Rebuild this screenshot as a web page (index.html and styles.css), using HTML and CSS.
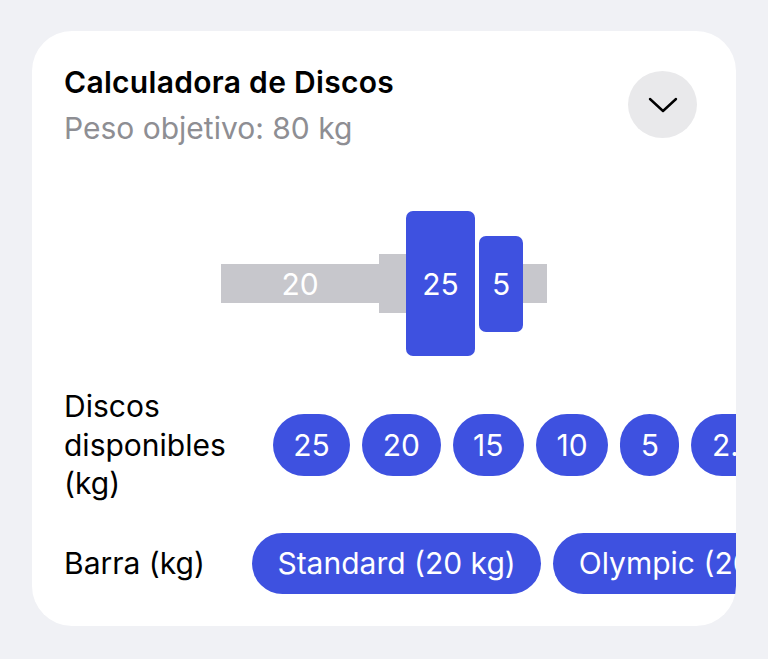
FILE: index.html
```html
<!DOCTYPE html>
<html lang="es">
<head>
<meta charset="utf-8">
<title>Calculadora de Discos</title>
<link rel="stylesheet" href="styles.css">
</head>
<body>
<main class="page">
  <section class="card">
    <header class="card-header">
      <div class="titles">
        <h1 class="title">Calculadora de Discos</h1>
        <p class="subtitle">Peso objetivo: 80 kg</p>
      </div>
      <button class="toggle" aria-label="Contraer">
        <svg width="30" height="16" viewBox="0 0 30 16" fill="none" stroke="#000" stroke-width="2.4" stroke-linecap="round" stroke-linejoin="round"><path d="M2 2 L15 14 L28 2"/></svg>
      </button>
    </header>

    <div class="barbell">
      <div class="bar bar-left">20</div>
      <div class="collar"></div>
      <div class="plate plate-25">25</div>
      <div class="plate plate-5">5</div>
      <div class="bar bar-right"></div>
    </div>

    <div class="row">
      <div class="label label-discs">Discos disponibles (kg)</div>
      <div class="chips">
        <span class="chip">25</span>
        <span class="chip">20</span>
        <span class="chip">15</span>
        <span class="chip">10</span>
        <span class="chip">5</span>
        <span class="chip">2.5</span>
        <span class="chip">1.25</span>
      </div>
    </div>

    <div class="row row-bar">
      <div class="label">Barra (kg)</div>
      <div class="chips">
        <span class="chip chip-wide">Standard (20 kg)</span>
        <span class="chip chip-wide">Olympic (20 kg)</span>
        <span class="chip chip-wide">Women (15 kg)</span>
      </div>
    </div>
  </section>
</main>
</body>
</html>
```

FILE: styles.css
```css
* { box-sizing: border-box; }
html, body { margin: 0; padding: 0; }
body {
  background: #f0f1f5;
  font-family: Inter, "Noto Sans", "Liberation Sans", sans-serif;
  color: #000;
}
.page {
  padding: 31px 32px 33px 32px;
}
.card {
  background: #fff;
  border-radius: 40px;
  padding: 32px 0 32px 32px;
  overflow: hidden;
}
.card-header {
  display: flex;
  justify-content: space-between;
  align-items: flex-start;
  padding-right: 39px;
}
.title {
  margin: 0;
  font-size: 30px;
  font-weight: 600;
  line-height: 38px;
  letter-spacing: 0.3px;
}
.subtitle {
  margin: 8px 0 0 0;
  font-size: 30px;
  font-weight: 400;
  line-height: 38px;
  color: #8e8e93;
}
.toggle {
  width: 69px;
  height: 67px;
  margin-top: 8px;
  border: none;
  border-radius: 50%;
  background: #e9e9eb;
  display: flex;
  align-items: center;
  justify-content: center;
  padding: 0;
}
.barbell {
  display: flex;
  align-items: center;
  justify-content: center;
  margin: 64px 32px 0 0;
  height: 145px;
}
.bar {
  background: #c7c7cc;
  height: 39px;
}
.bar-left {
  width: 158px;
  color: #fff;
  font-size: 30px;
  display: flex;
  align-items: center;
  justify-content: center;
}
.bar-right { width: 24px; }
.collar {
  background: #c7c7cc;
  width: 27px;
  height: 59px;
}
.plate {
  background: #3e51e0;
  color: #fff;
  border-radius: 7px;
  font-size: 30px;
  display: flex;
  align-items: center;
  justify-content: center;
}
.plate-25 { width: 69px; height: 145px; }
.plate-5 { width: 44px; height: 96px; margin-left: 4px; }

.row {
  display: flex;
  align-items: center;
  gap: 47px;
  margin-top: 31px;
}
.row-bar { margin-top: 30px; }
.label {
  flex: none;
  font-size: 30px;
  line-height: 38.5px;
}
.label-discs { width: min-content; }
.chips {
  display: flex;
  gap: 12px;
  overflow: hidden;
  flex: 1;
  min-width: 0;
}
.chip {
  flex: none;
  background: #3e51e0;
  color: #fff;
  font-size: 30px;
  height: 62px;
  padding: 0 20.5px;
  border-radius: 31px;
  display: flex;
  align-items: center;
}
.chip-wide { padding: 0 25.5px; height: 61px; }
```
